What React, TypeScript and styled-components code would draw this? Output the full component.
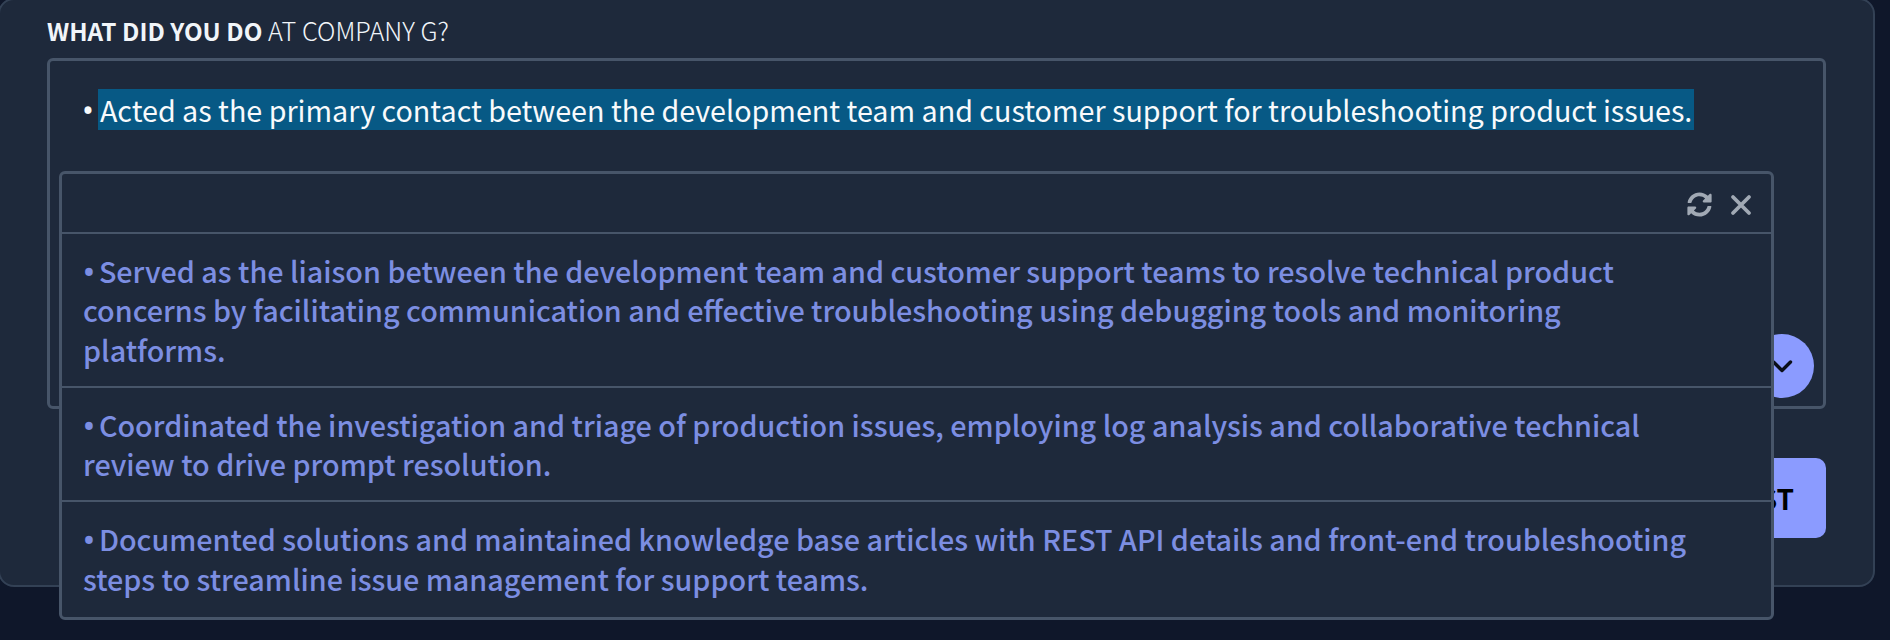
import React from 'react';
import styled, { createGlobalStyle } from 'styled-components';
import { FaSyncAlt } from 'react-icons/fa';

const GlobalStyle = createGlobalStyle`
    html, body {
        margin: 0;
        padding: 0;
        background: #0f172a;
    }
    body {
        font-family: 'Noto Sans CJK SC', 'Noto Sans', sans-serif;
    }
`;

const Page = styled.div`
    height: 640px;
    overflow: hidden;
    background: #0f172a;
`;

const Panel = styled.section`
    box-sizing: border-box;
    width: 1877px;
    height: 589px;
    margin: -2px 0 0 -2px;
    padding: 14px 47px 0 47px;
    background: #1e293b;
    border: 2px solid #334155;
    border-radius: 16px;
`;

const Label = styled.div`
    font-size: 25.3px;
    line-height: 32px;
    color: #f1f5f9;
    font-weight: 300;
    margin-bottom: 11px;
`;

const LabelStrong = styled.strong`
    font-size: 24.3px;
    font-weight: 700;
`;

const Editor = styled.div`
    position: relative;
    box-sizing: border-box;
    height: 351px;
    border: 3px solid #475569;
    border-radius: 6px;
    padding: 27px 0 0 32px;
`;

const EditorLine = styled.div`
    font-size: 28.7px;
    line-height: 43px;
    color: #f8fafc;
    font-weight: 400;
`;

const Bullet = styled.span`
    font-family: 'Noto Sans', sans-serif;
    font-size: 1.1em;
    line-height: 1;
    margin-right: 4px;
`;

const Selected = styled.span`
    background: #075985;
    padding: 0 2px;
`;

const RoundButton = styled.button`
    position: absolute;
    right: 9px;
    bottom: 8px;
    width: 64px;
    height: 64px;
    border: 0;
    border-radius: 50%;
    background: #8b9bff;
    color: #0b0f19;
    display: flex;
    align-items: center;
    justify-content: center;
    padding: 0;
`;

const Actions = styled.div`
    display: flex;
    justify-content: flex-end;
    margin-top: 49px;
`;

const PrimaryButton = styled.button`
    height: 80px;
    padding: 0 32px;
    border: 0;
    border-radius: 10px;
    background: #8b9bff;
    color: #000;
    font-family: inherit;
    font-size: 28px;
    font-weight: 700;
`;

const Popover = styled.div`
    position: absolute;
    left: 9px;
    top: 110px;
    box-sizing: border-box;
    width: 1715px;
    background: #1e293b;
    border: 3px solid #475569;
    border-radius: 6px;
`;

const PopoverHeader = styled.div`
    box-sizing: border-box;
    display: flex;
    justify-content: flex-end;
    align-items: center;
    gap: 18px;
    height: 58px;
    padding: 3px 19px 0 0;
`;

const IconButton = styled.span`
    display: flex;
    color: #a1a9b4;
`;

const Suggestion = styled.div`
    border-top: 2px solid #475569;
    padding: 17px 75px 16.7px 21px;
    font-size: 28.72px;
    line-height: 39.4px;
    font-weight: 500;
    color: #7c8ee2;

    &:last-child {
        padding-bottom: 19px;
    }
`;

const suggestions = [
    'Served as the liaison between the development team and customer support teams to resolve technical product concerns by facilitating communication and effective troubleshooting using debugging tools and monitoring platforms.',
    'Coordinated the investigation and triage of production issues, employing log analysis and collaborative technical review to drive prompt resolution.',
    'Documented solutions and maintained knowledge base articles with REST API details and front-end troubleshooting steps to streamline issue management for support teams.',
];

function ChevronIcon() {
    return (
        <svg width="22" height="14" viewBox="0 0 22 14" fill="none" stroke="currentColor" strokeWidth="3.4" strokeLinecap="round" strokeLinejoin="round">
            <path d="M2.5 3l8.5 8.5L19.5 3" />
        </svg>
    );
}

function CloseIcon() {
    return (
        <svg width="22" height="22" viewBox="0 0 22 22" fill="none" stroke="currentColor" strokeWidth="3.8" strokeLinecap="round">
            <path d="M3 3l16 16M19 3L3 19" />
        </svg>
    );
}

export default function App() {
    return (
        <Page>
            <GlobalStyle />
            <Panel>
                <Label>
                    <LabelStrong>WHAT DID YOU DO</LabelStrong> AT COMPANY G?
                </Label>
                <Editor>
                    <EditorLine>
                        <Bullet>•</Bullet>
                        <Selected>Acted as the primary contact between the development team and customer support for troubleshooting product issues.</Selected>
                    </EditorLine>
                    <RoundButton>
                        <ChevronIcon />
                    </RoundButton>
                    <Popover>
                        <PopoverHeader>
                            <IconButton>
                                <FaSyncAlt size={25} />
                            </IconButton>
                            <IconButton>
                                <CloseIcon />
                            </IconButton>
                        </PopoverHeader>
                        {suggestions.map((text) => (
                            <Suggestion key={text}>
                                <Bullet>•</Bullet>
                                {text}
                            </Suggestion>
                        ))}
                    </Popover>
                </Editor>
                <Actions>
                    <PrimaryButton>SUGGEST</PrimaryButton>
                </Actions>
            </Panel>
        </Page>
    );
}
